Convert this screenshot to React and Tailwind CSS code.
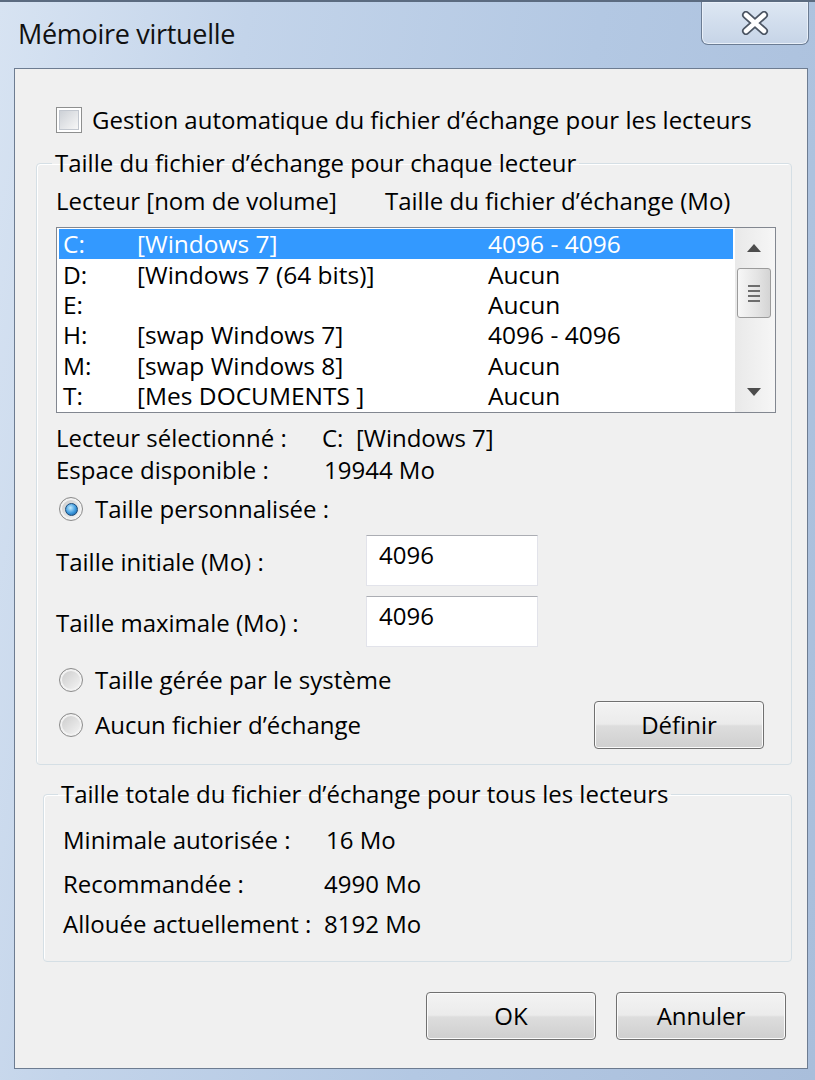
import React from 'react';

const drives = [
  { letter: 'C:', name: '[Windows 7]', size: '4096 - 4096', selected: true },
  { letter: 'D:', name: '[Windows 7 (64 bits)]', size: 'Aucun' },
  { letter: 'E:', name: '', size: 'Aucun' },
  { letter: 'H:', name: '[swap Windows 7]', size: '4096 - 4096' },
  { letter: 'M:', name: '[swap Windows 8]', size: 'Aucun' },
  { letter: 'T:', name: '[Mes DOCUMENTS ]', size: 'Aucun' },
];

function Radio({ checked }) {
  return (
    <span className="flex h-[24px] w-[24px] shrink-0 items-center justify-center rounded-full border border-[#8c8c8c] bg-[linear-gradient(135deg,#c9c9c9,#f7f7f7)] shadow-[inset_0_0_0_2px_#f2f2f2]">
      {checked && (
        <span className="h-[13px] w-[13px] rounded-full border border-[#1b4a78] bg-[radial-gradient(circle_at_40%_35%,#c4ecff,#3b98dd_55%,#17528c)]" />
      )}
    </span>
  );
}

function Checkbox() {
  return (
    <span className="flex h-[26px] w-[26px] shrink-0 items-center justify-center border border-[#8e8f8f] bg-white">
      <span className="h-[20px] w-[20px] border border-[#c2c7cf] bg-[linear-gradient(135deg,#cdd1d7,#f7f7f7)]" />
    </span>
  );
}

function WinButton({ children, className = '' }) {
  return (
    <button className={`h-[48px] w-[170px] rounded-[4px] border border-[#707070] bg-[linear-gradient(#f3f3f3_0%,#ebebeb_48%,#dddddd_52%,#cfcfcf_100%)] text-[24px] text-black shadow-[inset_0_0_0_1px_#fbfbfb] ${className}`}>
      {children}
    </button>
  );
}

function SizeInput({ value }) {
  return (
    <div className="h-[51px] w-[172px] border border-[#e2e3ea] border-t-[#abadb3] bg-white pl-[12px] pt-[4px] leading-[30px]">
      {value}
    </div>
  );
}

function ScrollArrow({ up }) {
  return (
    <svg width="14" height="8" viewBox="0 0 14 8">
      <path d={up ? 'M0 8 L7 0 L14 8 Z' : 'M0 0 L7 8 L14 0 Z'} fill="#4d4d4d" />
    </svg>
  );
}

export default function App() {
  return (
    <div className="flex h-[1080px] w-[815px] flex-col overflow-hidden border-t-2 border-[#5b6b80] bg-[linear-gradient(100deg,#d7e3f2_0%,#c3d4ea_25%,#b3c8e3_60%,#a9bedb_100%)] font-['Open_Sans',sans-serif] text-[24px] text-black">
      {/* title bar */}
      <div className="flex h-[66px] shrink-0 items-start justify-between">
        <div className="pl-[18px] pt-[14px] text-[27px] leading-[36px] text-[#111] tracking-[-0.3px]">Mémoire virtuelle</div>
        <div className="mr-[6px] flex h-[43px] w-[108px] items-center justify-center rounded-b-[7px] border border-t-0 border-[#6b7c93] bg-[linear-gradient(#dde7f3,#c6d4e7)] shadow-[inset_0_0_0_1px_#e9f0f9]">
          <svg width="30" height="24" viewBox="0 0 30 24">
            <path d="M6 4 L24 20 M24 4 L6 20" stroke="#4b5563" strokeWidth="8" strokeLinecap="round" />
            <path d="M6 4 L24 20 M24 4 L6 20" stroke="#ffffff" strokeWidth="4.5" strokeLinecap="round" />
          </svg>
        </div>
      </div>

      {/* client area */}
      <div className="ml-[14px] flex h-[1001px] w-[794px] flex-col border border-[#6d7c91] bg-[#f0f0f0] pt-[36px]">
        <div className="ml-[41px] flex h-[30px] items-center gap-[10px]">
          <Checkbox />
          <span className="leading-[30px]">Gestion automatique du fichier d’échange pour les lecteurs</span>
        </div>

        {/* group 1 */}
        <fieldset className="ml-[21px] mt-[13px] w-[756px] rounded-[4px] border border-[#d5dfe5] p-0 shadow-[inset_1px_1px_0_#ffffff]">
          <legend className="ml-[15px] px-[3px] leading-[30px]">Taille du fichier d’échange pour chaque lecteur</legend>
          <div className="flex flex-col pb-[15px] pl-[19px]">
            <div className="mt-[8px] flex h-[30px] items-center leading-[30px]">
              <span className="w-[329px]">Lecteur [nom de volume]</span>
              <span>Taille du fichier d’échange (Mo)</span>
            </div>

            <div className="mt-[11px] flex h-[186px] w-[720px] border border-[#828790] bg-white">
              <div className="flex flex-1 flex-col px-[2px] pt-[1px] text-[24.5px]">
                {drives.map((d) => (
                  <div
                    key={d.letter}
                    className={`flex h-[30.4px] items-center leading-[30px] ${d.selected ? 'bg-[#3399ff] text-white' : ''}`}
                  >
                    <span className="w-[78px] pl-[4px]">{d.letter}</span>
                    <span className="w-[351px]">{d.name}</span>
                    <span>{d.size}</span>
                  </div>
                ))}
              </div>
              <div className="flex w-[40px] flex-col items-center bg-[linear-gradient(90deg,#e9e9e9,#f6f6f6)]">
                <div className="flex h-[40px] items-center justify-center pr-[2px]">
                  <ScrollArrow up />
                </div>
                <div className="mr-[2px] flex h-[50px] w-[34px] items-center justify-center rounded-[3px] border border-[#9b9b9b] bg-[linear-gradient(90deg,#f7f7f7,#e4e4e4_60%,#d4d4d4)]">
                  <div className="flex flex-col gap-[3px]">
                    <span className="h-[2px] w-[12px] bg-[#6e6e6e]" />
                    <span className="h-[2px] w-[12px] bg-[#6e6e6e]" />
                    <span className="h-[2px] w-[12px] bg-[#6e6e6e]" />
                    <span className="h-[2px] w-[12px] bg-[#6e6e6e]" />
                  </div>
                </div>
                <div className="flex-1" />
                <div className="flex h-[40px] items-center justify-center pr-[2px]">
                  <ScrollArrow />
                </div>
              </div>
            </div>

            <div className="mt-[10px] flex h-[30px] leading-[30px]">
              <span className="w-[266px]">Lecteur sélectionné :</span>
              <span>C:&nbsp;&nbsp;[Windows 7]</span>
            </div>
            <div className="mt-[2px] flex h-[30px] leading-[30px]">
              <span className="w-[268px]">Espace disponible :</span>
              <span>19944 Mo</span>
            </div>

            <div className="ml-[3px] mt-[9px] flex h-[30px] items-center gap-[12px] leading-[30px]">
              <Radio checked />
              <span>Taille personnalisée :</span>
            </div>

            <div className="mt-[11px] flex h-[51px] items-center">
              <span className="w-[310px] pt-[2px]">Taille initiale (Mo) :</span>
              <SizeInput value="4096" />
            </div>
            <div className="mt-[10px] flex h-[51px] items-center">
              <span className="w-[310px] pt-[2px]">Taille maximale (Mo) :</span>
              <SizeInput value="4096" />
            </div>

            <div className="ml-[3px] mt-[18px] flex h-[30px] items-center gap-[12px] leading-[30px]">
              <Radio />
              <span>Taille gérée par le système</span>
            </div>

            <div className="mt-[6px] flex h-[48px] items-center">
              <div className="ml-[3px] flex flex-1 items-center gap-[12px] leading-[30px]">
                <Radio />
                <span>Aucun fichier d’échange</span>
              </div>
              <WinButton className="mr-[27px]">Définir</WinButton>
            </div>
          </div>
        </fieldset>

        {/* group 2 */}
        <fieldset className="ml-[28px] mt-[14px] w-[749px] rounded-[4px] border border-[#d5dfe5] p-0 shadow-[inset_1px_1px_0_#ffffff]">
          <legend className="ml-[14px] px-[3px] leading-[30px]">Taille totale du fichier d’échange pour tous les lecteurs</legend>
          <div className="flex flex-col pb-[22px] pl-[19px]">
            <div className="mt-[16px] flex h-[30px] leading-[30px]">
              <span className="w-[263px]">Minimale autorisée :</span>
              <span>16 Mo</span>
            </div>
            <div className="mt-[14px] flex h-[30px] leading-[30px]">
              <span className="w-[261px]">Recommandée :</span>
              <span>4990 Mo</span>
            </div>
            <div className="mt-[10px] flex h-[30px] leading-[30px]">
              <span className="w-[261px]">Allouée actuellement :</span>
              <span>8192 Mo</span>
            </div>
          </div>
        </fieldset>

        <div className="mr-[21px] mt-[30px] flex justify-end gap-[20px]">
          <WinButton>OK</WinButton>
          <WinButton>Annuler</WinButton>
        </div>
      </div>
    </div>
  );
}
